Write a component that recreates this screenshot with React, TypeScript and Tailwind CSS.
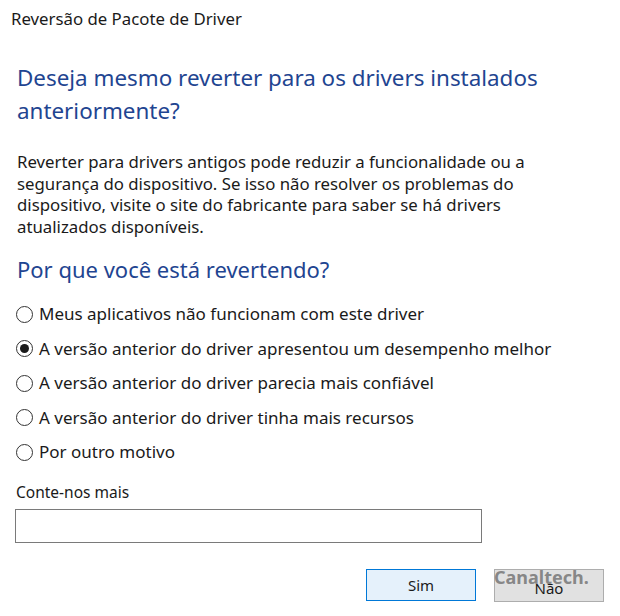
import { useState } from 'react'

const reasons = [
  'Meus aplicativos não funcionam com este driver',
  'A versão anterior do driver apresentou um desempenho melhor',
  'A versão anterior do driver parecia mais confiável',
  'A versão anterior do driver tinha mais recursos',
  'Por outro motivo',
]

function Radio({ checked }: { checked: boolean }) {
  return (
    <span className="flex h-[17px] w-[17px] shrink-0 items-center justify-center rounded-full border border-[#333] bg-white">
      {checked && <span className="h-[9px] w-[9px] rounded-full bg-[#1a1a1a]" />}
    </span>
  )
}

export default function App() {
  const [selected, setSelected] = useState(1)
  const [more, setMore] = useState('')

  return (
    <div className="h-[616px] w-[620px] bg-white font-['Noto_Sans',sans-serif] text-[#1a1a1a]">
      {/* Window title */}
      <div className="px-[11px] pt-[9px] text-[16.8px] leading-[20px]">Reversão de Pacote de Driver</div>

      <div className="px-[17px]">
        <h1 className="mt-[32px] whitespace-nowrap text-[22.4px] leading-[33px] text-[#1f4591]">
          Deseja mesmo reverter para os drivers instalados
          <br />
          anteriormente?
        </h1>

        <p className="mt-[24px] whitespace-nowrap text-[16.8px] leading-[21.7px]">
          Reverter para drivers antigos pode reduzir a funcionalidade ou a
          <br />
          segurança do dispositivo. Se isso não resolver os problemas do
          <br />
          dispositivo, visite o site do fabricante para saber se há drivers
          <br />
          atualizados disponíveis.
        </p>

        <h2 className="mt-[16px] text-[22px] leading-[30px] text-[#1f4591]">Por que você está revertendo?</h2>

        <div className="mt-[13px] flex flex-col">
          {reasons.map((r, i) => (
            <label
              key={r}
              className="-ml-px flex h-[34.5px] cursor-default items-center gap-[6px] text-[17px]"
              onClick={() => setSelected(i)}
            >
              <Radio checked={selected === i} />
              <span>{r}</span>
            </label>
          ))}
        </div>

        <div className="-ml-px mt-[12px] text-[15.5px] leading-[22px]">Conte-nos mais</div>
        <input
          value={more}
          onChange={(e) => setMore(e.target.value)}
          className="-ml-[2px] mt-[6px] h-[34px] w-[467px] border border-[#7a7a7a] bg-white px-2 text-[16px] outline-none"
        />
      </div>

      <div className="mt-[26px] flex justify-end gap-[18px] pr-[16px]">
        <button className="h-[32px] w-[110px] border border-[#0078d7] bg-[#e5f1fb] text-[15px]">Sim</button>
        <button className="relative h-[33px] w-[110px] border border-[#adadad] bg-[#e1e1e1] pt-[4px] text-[15px]">
          Não
          <span className="absolute left-[-1px] top-[-6px] text-[18px] font-bold text-[#6e6e6e]/80">Canaltech.</span>
        </button>
      </div>
    </div>
  )
}
